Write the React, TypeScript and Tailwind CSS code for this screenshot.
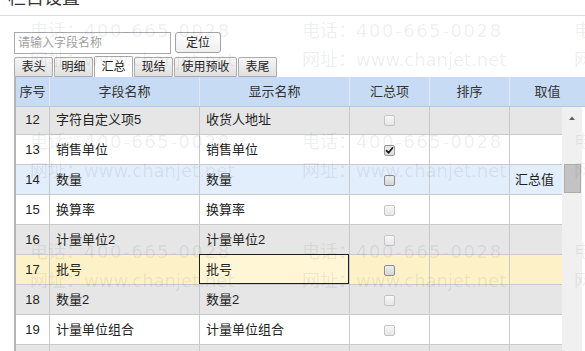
import React from "react";

type CbKind = "light" | "dark" | "checked" | "none";

interface Row {
  no: number;
  field: string;
  display: string;
  bg: string;
  cb: CbKind;
  value?: string;
  editing?: boolean;
}

const rows: Row[] = [
  { no: 12, field: "字符自定义项5", display: "收货人地址", bg: "bg-[#e6e6e6]", cb: "light" },
  { no: 13, field: "销售单位", display: "销售单位", bg: "bg-white", cb: "checked" },
  { no: 14, field: "数量", display: "数量", bg: "bg-[#e2eefb]", cb: "dark", value: "汇总值" },
  { no: 15, field: "换算率", display: "换算率", bg: "bg-white", cb: "light" },
  { no: 16, field: "计量单位2", display: "计量单位2", bg: "bg-[#e6e6e6]", cb: "light" },
  { no: 17, field: "批号", display: "批号", bg: "bg-[#fdf2c7]", cb: "dark", editing: true },
  { no: 18, field: "数量2", display: "数量2", bg: "bg-[#e6e6e6]", cb: "light" },
  { no: 19, field: "计量单位组合", display: "计量单位组合", bg: "bg-white", cb: "light" },
  { no: 20, field: "", display: "", bg: "bg-[#e6e6e6]", cb: "light" },
];

function Checkbox({ kind }: { kind: CbKind }) {
  if (kind === "none") return null;
  if (kind === "checked") {
    return (
      <div className="w-[11px] h-[11px] rounded-[2px] border border-[#9a9a9a] bg-gradient-to-b from-[#f0f0f0] to-[#dcdcdc] flex items-center justify-center">
        <svg width="9" height="9" viewBox="0 0 9 9">
          <path d="M1.5 4.6 L3.6 6.8 L7.6 1.8" fill="none" stroke="#1a1a1a" strokeWidth="1.7" strokeLinecap="round" strokeLinejoin="round" />
        </svg>
      </div>
    );
  }
  if (kind === "dark") {
    return <div className="w-[11px] h-[11px] rounded-[2px] border border-[#8c8c8c] bg-gradient-to-b from-[#eeeeee] to-[#d6d6d6]" />;
  }
  return <div className="w-[11px] h-[11px] rounded-[2px] border border-[#c4c4c4] bg-gradient-to-b from-[#f8f8f8] to-[#e6e6e6]" />;
}

const tabs = ["表头", "明细", "汇总", "现结", "使用预收", "表尾"];

export default function App() {
  return (
    <div className="relative w-[585px] h-[351px] overflow-hidden bg-white text-[#222] font-['Liberation_Sans','Noto_Sans_CJK_SC',sans-serif]">
      {/* Title */}
      <div className="h-[16px] border-b border-[#dcdcdc] overflow-hidden pl-[8px]">
        <div className="mt-[-11px] text-[18px] leading-[18px] text-[#333]">栏目设置</div>
      </div>

      {/* Search row */}
      <div className="mt-[16px] pl-[14px] flex items-start gap-[4px]">
        <input
          placeholder="请输入字段名称"
          className="w-[157px] h-[22px] border border-[#a9abb0] px-[3px] text-[12px] outline-none placeholder:text-[#a0a0a0] bg-white"
        />
        <button className="w-[46px] h-[21px] rounded-[3px] border border-[#a3a3a3] bg-gradient-to-b from-white to-[#efefef] text-[12px] text-[#222] leading-none">
          定位
        </button>
      </div>

      {/* Tabs */}
      <div className="mt-[2px] pl-[14px] h-[21px] flex items-end gap-[1px]">
        {tabs.map((t) => {
          const active = t === "汇总";
          const w = t.length === 4 ? "w-[63px]" : "w-[39px]";
          return active ? (
            <div
              key={t}
              className={`${w} h-[21px] border border-b-0 border-[#a8a8a8] rounded-t-[2px] bg-white text-[12px] flex items-center justify-center`}
            >
              {t}
            </div>
          ) : (
            <div
              key={t}
              className={`${w} h-[20px] border border-[#acacac] rounded-t-[2px] bg-gradient-to-b from-[#f6f6f6] to-[#e0e0e0] text-[12px] flex items-center justify-center`}
            >
              {t}
            </div>
          );
        })}
      </div>

      {/* Table */}
      <div className="ml-[14px] border-l-2 border-[#b6b6b6]">
        {/* Header */}
        <div className="flex h-[30px] bg-[#c7dcf4] border-b border-[#b3c9e2] text-[13px] text-[#333]">
          <div className="w-[34px] border-r border-[#e3eaf3] flex items-center justify-center">序号</div>
          <div className="w-[150px] border-r border-[#e3eaf3] flex items-center justify-center">字段名称</div>
          <div className="w-[150px] border-r border-[#e3eaf3] flex items-center justify-center">显示名称</div>
          <div className="w-[80px] border-r border-[#e3eaf3] flex items-center justify-center">汇总项</div>
          <div className="w-[80px] border-r border-[#e3eaf3] flex items-center justify-center">排序</div>
          <div className="flex-1 flex items-center justify-center">取值</div>
        </div>

        {/* Body */}
        <div className="flex h-[244px]">
          <div className="w-[546px] overflow-hidden">
            <div className="mt-[-2px]">
              {rows.map((r) => (
                <div key={r.no} className={`flex h-[30px] border-b border-[#c9c9c9] ${r.bg} text-[13px]`}>
                  <div className="w-[34px] border-r border-[#c9c9c9] flex items-center justify-center">{r.no}</div>
                  <div className="w-[150px] border-r border-[#c9c9c9] flex items-center pl-[6px]">{r.field}</div>
                  <div className="relative w-[150px] border-r border-[#c9c9c9] flex items-center pl-[6px]">
                    {r.editing && (
                      <div className="absolute left-[-1px] top-[-1px] right-[0px] bottom-[0px] border border-[#1e1e1e] bg-[#fff6d6]" />
                    )}
                    <span className="relative">{r.display}</span>
                  </div>
                  <div className="w-[80px] border-r border-[#c9c9c9] flex items-center justify-center pt-[1px]">
                    <Checkbox kind={r.cb} />
                  </div>
                  <div className="w-[80px] border-r border-[#c9c9c9]" />
                  <div className="w-[52px] flex items-center pl-[5px]">{r.value ?? ""}</div>
                </div>
              ))}
            </div>
          </div>
          {/* Scrollbar */}
          <div className="w-[20px] bg-[#f0f0f0] flex flex-col items-center">
            <div className="h-[21px] flex items-center justify-center">
              <svg width="6" height="4" viewBox="0 0 6 4">
                <path d="M0 4 L3 0.5 L6 4 Z" fill="#5f5f5f" />
              </svg>
            </div>
            <div className="mt-[36px] w-[17px] h-[29px] bg-[#c3c3c3] border border-[#acacac]" />
          </div>
          <div className="flex-1" />
        </div>
      </div>

      {/* Watermark overlay */}
      <div className="pointer-events-none absolute inset-0 overflow-hidden">
        <div className="pl-[30px] pt-[16px] grid grid-cols-[repeat(3,272px)] auto-rows-[110.5px] text-[18px] leading-[29px] text-black/[0.075] font-['DejaVu_Sans','Noto_Sans_CJK_SC',sans-serif] whitespace-nowrap">
          {Array.from({ length: 9 }).map((_, i) => (
            <div key={i}>
              <div>
                <span>电话：</span>
                <span className="tracking-[1.6px]">400-665-0028</span>
              </div>
              <div>网址：www.chanjet.net</div>
            </div>
          ))}
        </div>
      </div>
    </div>
  );
}
